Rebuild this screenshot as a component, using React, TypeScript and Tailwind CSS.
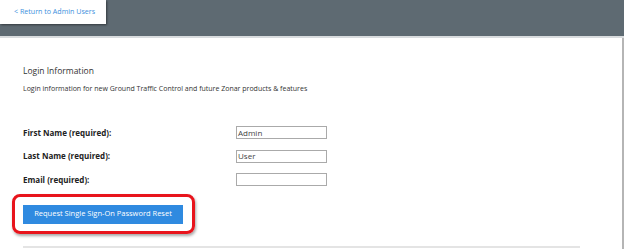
import React from "react";

const fields = [
  { label: "First Name (required):", value: "Admin" },
  { label: "Last Name (required):", value: "User" },
  { label: "Email (required):", value: "" },
];

const App = () => {
  return (
    <div
      className="w-[624px] h-[249px] bg-white overflow-hidden flex flex-col"
      style={{ fontFamily: '"Open Sans", sans-serif' }}
    >
      <div className="h-[38px] bg-[#5e6a72] border-b-2 border-[#d9dcde] flex items-start shrink-0">
        <div className="w-[106px] h-[24px] bg-white shadow-[1px_1px_2px_rgba(0,0,0,0.45)] flex items-center pl-[14px]">
          <span className="text-[7.1px] text-[#3d8fdd] leading-none whitespace-nowrap">
            &lt; Return to Admin Users
          </span>
        </div>
      </div>

      <div className="flex-1 border-r-2 border-[#b5b5b5] flex flex-col pl-[23px]">
        <h2 className="mt-[26px] text-[8.5px] text-[#333] leading-[14px]">
          Login Information
        </h2>
        <p className="mt-[5px] text-[7px] text-[#333] leading-[12px]">
          Login information for new Ground Traffic Control and future Zonar
          products &amp; features
        </p>

        <div className="mt-[31px] flex flex-col gap-[10.5px]">
          {fields.map((field) => (
            <div key={field.label} className="flex items-center h-[13px]">
              <span className="w-[213px] text-[8px] font-bold text-[#222] whitespace-nowrap">
                {field.label}
              </span>
              <div className="w-[91px] h-[13px] border border-[#aaa] bg-white flex items-center px-[1px]">
                <span className="text-[8px] text-[#444] leading-none">
                  {field.value}
                </span>
              </div>
            </div>
          ))}
        </div>

        <div className="mt-[8px] -ml-[11px] w-[183px] h-[40px] border-[3px] border-[#e8141c] rounded-[8px] shadow-[1px_2px_3px_rgba(0,0,0,0.35)] flex items-center pl-[8px]">
          <div className="w-[160px] h-[19px] bg-[#2f8ae0] flex items-center justify-center">
            <span className="text-[7.5px] text-white leading-none whitespace-nowrap">
              Request Single Sign-On Password Reset
            </span>
          </div>
        </div>

        <div className="mt-[12px] w-[557px] h-[2px] bg-[#e4e4e4]" />
      </div>
    </div>
  );
};

export default App;
